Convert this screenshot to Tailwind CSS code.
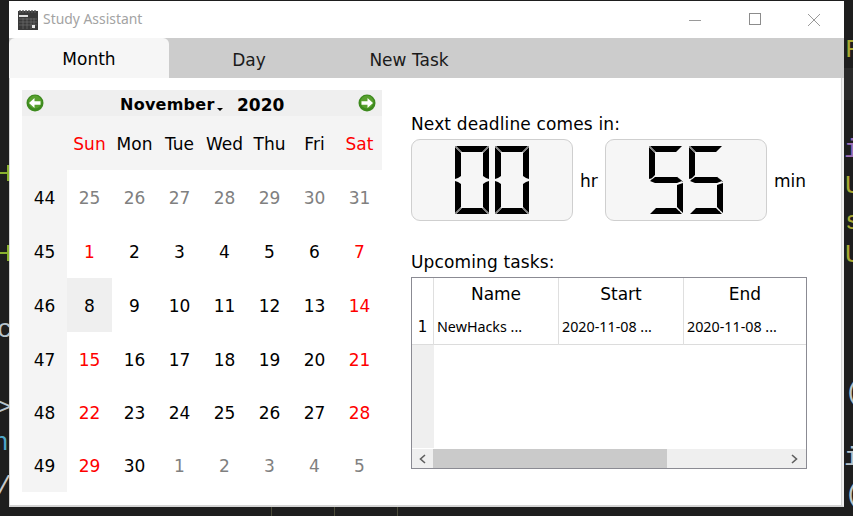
<!DOCTYPE html>
<html>
<head>
<meta charset="utf-8">
<script src="https://cdn.jsdelivr.net/npm/@tailwindcss/browser@4"></script>
</head>
<body class="m-0 overflow-hidden">
<div class="relative w-[853px] h-[516px] bg-[#1e1e1e] overflow-hidden font-['DejaVu_Sans',sans-serif] text-black">

  <!-- code behind the window -->
  <div class="absolute left-0 top-[172px] w-[9px] h-[2px] bg-[#8ab02f]"></div>
  <div class="absolute left-[7px] top-[165px] w-[2px] h-[16px] bg-[#8ab02f]"></div>
  <div class="absolute left-0 top-[252px] w-[9px] h-[2px] bg-[#8ab02f]"></div>
  <div class="absolute left-[7px] top-[245px] w-[2px] h-[16px] bg-[#8ab02f]"></div>
  <div class="absolute left-[-3px] top-[315px] text-[26px] leading-[30px] text-[#b8c4cc] font-['Liberation_Mono',monospace]">c</div>
  <div class="absolute left-[-4px] top-[393px] text-[26px] leading-[30px] text-[#b8c4cc] font-['Liberation_Mono',monospace]">&gt;</div>
  <div class="absolute left-[-7px] top-[428px] text-[26px] leading-[30px] text-[#4ea6c8] font-['Liberation_Mono',monospace]">h</div>
  <div class="absolute left-[-4px] top-[472px] text-[26px] leading-[30px] text-[#c8c8c8] font-['Liberation_Mono',monospace]">/</div>
  <div class="absolute left-[844px] top-[68px] w-[9px] h-[32px] bg-[#2a2a2a]"></div>
  <div class="absolute left-[845px] top-[35px] text-[26px] leading-[30px] text-[#a8a832] font-['Liberation_Mono',monospace]">F</div>
  <div class="absolute left-[844px] top-[135px] text-[26px] leading-[30px] text-[#a070b8] font-['Liberation_Mono',monospace]">i</div>
  <div class="absolute left-[845px] top-[171px] text-[26px] leading-[30px] text-[#a8a832] font-['Liberation_Mono',monospace]">U</div>
  <div class="absolute left-[845px] top-[207px] text-[26px] leading-[30px] text-[#a8a832] font-['Liberation_Mono',monospace]">s</div>
  <div class="absolute left-[845px] top-[240px] text-[26px] leading-[30px] text-[#a8a832] font-['Liberation_Mono',monospace]">U</div>
  <div class="absolute left-[845px] top-[378px] text-[26px] leading-[30px] text-[#b8c4cc] font-['Liberation_Mono',monospace]">(</div>
  <div class="absolute left-[844px] top-[443px] text-[26px] leading-[30px] text-[#b8c4cc] font-['Liberation_Mono',monospace]">i</div>
  <div class="absolute left-[845px] top-[480px] text-[26px] leading-[30px] text-[#b8c4cc] font-['Liberation_Mono',monospace]">(</div>
  <div class="absolute left-[271px] top-[507px] w-[1px] h-[9px] bg-[#4a4a38]"></div>
  <div class="absolute left-[334px] top-[507px] w-[1px] h-[9px] bg-[#4a4a38]"></div>
  <div class="absolute left-[397px] top-[507px] w-[1px] h-[9px] bg-[#4a4a38]"></div>

  <!-- window -->
  <div class="absolute left-[9px] top-[1px] w-[835px] h-[506px] bg-white border-r-[2px] border-b-[2px] border-r-[#efefef] border-b-[#d4d4d4] flex flex-col">
    <!-- title bar -->
    <div class="h-[37px] flex items-center shrink-0 relative mr-[-2px] bg-white">
      <svg class="ml-[9px]" width="20" height="20" viewBox="0 0 20 20">
        <rect x="0" y="1" width="20" height="19" fill="#3a3a3a"/>
        <path d="M2 0v3M5 0v3M8 0v3M11 0v3M14 0v3M17 0v3" stroke="#555" stroke-width="1.4"/>
        <rect x="1" y="5" width="9" height="2" fill="#ddd"/>
        <path d="M1 9h18M1 12h18M1 15h18M5 8v11M9 8v11M13 8v11M16 8v11" stroke="#777" stroke-width="0.6"/>
        <rect x="14" y="15" width="3" height="3" fill="#e8e8e8"/>
      </svg>
      <span class="ml-[5px] text-[13.9px] text-[#a3a3a3] font-['Noto_Sans',sans-serif]">Study Assistant</span>
      <div class="ml-auto flex items-center">
        <svg width="14" height="14" viewBox="0 0 14 14" class="mr-[47px]"><path d="M1 7.5h12" stroke="#9a9a9a"/></svg>
        <svg width="13" height="13" viewBox="0 0 13 13" class="mr-[45px]"><rect x="0.5" y="0.5" width="11" height="11" fill="none" stroke="#8c8c8c"/></svg>
        <svg width="14" height="14" viewBox="0 0 14 14" class="mr-[23px]"><path d="M1 1l12 12M13 1L1 13" stroke="#9a9a9a"/></svg>
      </div>
    </div>
    <!-- tabs -->
    <div class="h-[40px] bg-[#cccccc] flex shrink-0 mr-[-2px] text-[17px]">
      <div class="w-[160px] bg-[#f6f6f6] rounded-tr-[6px] rounded-tl-[6px] flex items-center justify-center pt-[3px]">Month</div>
      <div class="w-[160px] flex items-center justify-center pt-[5px] text-[#1a1a1a]">Day</div>
      <div class="w-[160px] flex items-center justify-center pt-[5px] text-[#1a1a1a]">New Task</div>
    </div>
    <!-- content -->
    <div class="flex flex-1 pl-[12px] pt-[12px] border-l border-r border-[#d4d4d4]">
      <!-- calendar -->
      <div class="w-[360px] shrink-0">
        <div class="h-[26px] bg-[#efefef] flex items-center justify-between px-[4px] relative">
          <svg width="18" height="18" viewBox="0 0 18 18"><circle cx="9" cy="9" r="8.5" fill="#3d8a1e"/><circle cx="9" cy="8" r="6.5" fill="#6fb23c" opacity=".55"/><path d="M3 9L8.5 4V7.2H14.5V10.8H8.5V14Z" fill="#fff"/></svg>
          <div class="absolute left-[98px] top-[5px] text-[16px] leading-[20px] font-bold whitespace-nowrap tracking-[0.25px]">November</div>
          <div class="absolute left-[215px] top-[5px] text-[17px] leading-[20px] font-bold whitespace-nowrap">2020</div>
          <div class="absolute left-[195px] top-[18px] w-0 h-0 border-x-[3px] border-x-transparent border-t-[3px] border-t-black"></div>
          <svg width="18" height="18" viewBox="0 0 18 18" class="mr-[2px]"><circle cx="9" cy="9" r="8.5" fill="#3d8a1e"/><circle cx="9" cy="8" r="6.5" fill="#6fb23c" opacity=".55"/><path d="M15 9L9.5 4V7.2H3.5V10.8H9.5V14Z" fill="#fff"/></svg>
        </div>
        <div class="grid grid-cols-[45px_repeat(7,45px)] grid-rows-[54px_54px_54px_54px_53px_53px_54px] text-[17px] text-center [&>div]:pt-[4px]">
          <div class="bg-[#f4f4f4]"></div>
          <div class="bg-[#f4f4f4] flex items-center justify-center text-[#ff0000]">Sun</div>
          <div class="bg-[#f4f4f4] flex items-center justify-center">Mon</div>
          <div class="bg-[#f4f4f4] flex items-center justify-center">Tue</div>
          <div class="bg-[#f4f4f4] flex items-center justify-center">Wed</div>
          <div class="bg-[#f4f4f4] flex items-center justify-center">Thu</div>
          <div class="bg-[#f4f4f4] flex items-center justify-center">Fri</div>
          <div class="bg-[#f4f4f4] flex items-center justify-center text-[#ff0000]">Sat</div>

          <div class="bg-[#f4f4f4] flex items-center justify-center">44</div>
          <div class="flex items-center justify-center text-[#808080]">25</div>
          <div class="flex items-center justify-center text-[#808080]">26</div>
          <div class="flex items-center justify-center text-[#808080]">27</div>
          <div class="flex items-center justify-center text-[#808080]">28</div>
          <div class="flex items-center justify-center text-[#808080]">29</div>
          <div class="flex items-center justify-center text-[#808080]">30</div>
          <div class="flex items-center justify-center text-[#808080]">31</div>

          <div class="bg-[#f4f4f4] flex items-center justify-center">45</div>
          <div class="flex items-center justify-center text-[#ff0000]">1</div>
          <div class="flex items-center justify-center">2</div>
          <div class="flex items-center justify-center">3</div>
          <div class="flex items-center justify-center">4</div>
          <div class="flex items-center justify-center">5</div>
          <div class="flex items-center justify-center">6</div>
          <div class="flex items-center justify-center text-[#ff0000]">7</div>

          <div class="bg-[#f4f4f4] flex items-center justify-center">46</div>
          <div class="bg-[#efefef] flex items-center justify-center">8</div>
          <div class="flex items-center justify-center">9</div>
          <div class="flex items-center justify-center">10</div>
          <div class="flex items-center justify-center">11</div>
          <div class="flex items-center justify-center">12</div>
          <div class="flex items-center justify-center">13</div>
          <div class="flex items-center justify-center text-[#ff0000]">14</div>

          <div class="bg-[#f4f4f4] flex items-center justify-center">47</div>
          <div class="flex items-center justify-center text-[#ff0000]">15</div>
          <div class="flex items-center justify-center">16</div>
          <div class="flex items-center justify-center">17</div>
          <div class="flex items-center justify-center">18</div>
          <div class="flex items-center justify-center">19</div>
          <div class="flex items-center justify-center">20</div>
          <div class="flex items-center justify-center text-[#ff0000]">21</div>

          <div class="bg-[#f4f4f4] flex items-center justify-center">48</div>
          <div class="flex items-center justify-center text-[#ff0000]">22</div>
          <div class="flex items-center justify-center">23</div>
          <div class="flex items-center justify-center">24</div>
          <div class="flex items-center justify-center">25</div>
          <div class="flex items-center justify-center">26</div>
          <div class="flex items-center justify-center">27</div>
          <div class="flex items-center justify-center text-[#ff0000]">28</div>

          <div class="bg-[#f4f4f4] flex items-center justify-center">49</div>
          <div class="flex items-center justify-center text-[#ff0000]">29</div>
          <div class="flex items-center justify-center">30</div>
          <div class="flex items-center justify-center text-[#808080]">1</div>
          <div class="flex items-center justify-center text-[#808080]">2</div>
          <div class="flex items-center justify-center text-[#808080]">3</div>
          <div class="flex items-center justify-center text-[#808080]">4</div>
          <div class="flex items-center justify-center text-[#808080]">5</div>
        </div>
      </div>

      <!-- right column -->
      <div class="ml-[29px] w-[396px] flex flex-col">
        <div class="mt-[24px] h-[20px] leading-[20px] text-[17px] tracking-[0.14px]">Next deadline comes in:</div>
        <div class="mt-[5px] flex items-center text-[17px]">
          <div class="w-[162px] h-[82px] rounded-[9px] border border-[#cfcfcf] bg-[#f6f6f6] flex items-center pl-[43px] gap-[6px]">
            <svg width="34" height="68" viewBox="0 0 34 68">
              <path d="M0 0L6 6M34 0L28 6M0 68L6 62M34 68L28 62" stroke="#888" stroke-width="1"/>
              <path d="M1 0H33L27 6H7Z M0 1L6 7V30L3 32L0 33Z M34 1L28 7V30L31 32L34 33Z M0 35L3 36L6 38V61L0 67Z M34 35L31 36L28 38V61L34 67Z M7 62H27L33 68H1Z"/>
            </svg>
            <svg width="34" height="68" viewBox="0 0 34 68">
              <path d="M0 0L6 6M34 0L28 6M0 68L6 62M34 68L28 62" stroke="#888" stroke-width="1"/>
              <path d="M1 0H33L27 6H7Z M0 1L6 7V30L3 32L0 33Z M34 1L28 7V30L31 32L34 33Z M0 35L3 36L6 38V61L0 67Z M34 35L31 36L28 38V61L34 67Z M7 62H27L33 68H1Z"/>
            </svg>
          </div>
          <span class="ml-[7px] w-[25px] pt-[4px]">hr</span>
          <div class="w-[162px] h-[82px] rounded-[9px] border border-[#cfcfcf] bg-[#f6f6f6] flex items-center pl-[43px] gap-[6px]">
            <svg width="34" height="68" viewBox="0 0 34 68">
              <path d="M0 0L6 6M34 62L28 68M0 31L6 36M28 31L34 36" stroke="#888" stroke-width="1"/>
              <path d="M1 0H33L27 6H7Z M0 1L6 7V29L3 32L0 33Z M6 31H28L33 35L28 37H6L1 35Z M34 37L28 39V61L34 67Z M7 62H27L33 68H1Z"/>
            </svg>
            <svg width="34" height="68" viewBox="0 0 34 68">
              <path d="M0 0L6 6M34 62L28 68M0 31L6 36M28 31L34 36" stroke="#888" stroke-width="1"/>
              <path d="M1 0H33L27 6H7Z M0 1L6 7V29L3 32L0 33Z M6 31H28L33 35L28 37H6L1 35Z M34 37L28 39V61L34 67Z M7 62H27L33 68H1Z"/>
            </svg>
          </div>
          <span class="ml-[7px] pt-[4px]">min</span>
        </div>
        <div class="mt-[31px] h-[20px] leading-[20px] text-[17px] tracking-[0.14px]">Upcoming tasks:</div>
        <!-- table -->
        <div class="mt-[5px] w-[396px] h-[192px] border border-[#8b8b93] flex flex-col bg-white relative overflow-hidden">
          <div class="flex-1 flex flex-col">
            <div class="grid grid-cols-[22px_125px_125px_122px] h-[31px] text-[17px] text-center">
              <div class="border-r border-[#dfdfdf]"></div>
              <div class="border-r border-[#dfdfdf] leading-[32px]">Name</div>
              <div class="border-r border-[#dfdfdf] leading-[32px]">Start</div>
              <div class="leading-[32px]">End</div>
            </div>
            <div class="grid grid-cols-[22px_125px_125px_122px] h-[36px] text-[14.3px] border-b border-[#dcdcdc] font-['Noto_Sans',sans-serif] leading-[36px]">
              <div class="border-r border-[#dfdfdf] text-center text-[15px] font-['DejaVu_Sans',sans-serif]">1</div>
              <div class="border-r border-[#dfdfdf] pl-[3px] whitespace-nowrap">NewHacks ...</div>
              <div class="border-r border-[#dfdfdf] pl-[3px] whitespace-nowrap">2020-11-08 ...</div>
              <div class="pl-[3px] whitespace-nowrap">2020-11-08 ...</div>
            </div>
            <div class="flex-1 w-[22px] bg-[#efefef]"></div>
          </div>
          <div class="h-[19px] mt-[1px] bg-[#efefef] flex items-center shrink-0">
            <div class="w-[21px] flex justify-center">
              <svg width="9" height="10" viewBox="0 0 9 10"><path d="M7 1L2.5 5L7 9" fill="none" stroke="#5f5f5f" stroke-width="1.6"/></svg>
            </div>
            <div class="w-[234px] h-[19px] bg-[#cacaca]"></div>
            <div class="ml-auto w-[24px] flex justify-center">
              <svg width="9" height="10" viewBox="0 0 9 10"><path d="M2 1L6.5 5L2 9" fill="none" stroke="#5f5f5f" stroke-width="1.6"/></svg>
            </div>
          </div>
        </div>
      </div>
    </div>
  </div>
</div>
</body>
</html>
